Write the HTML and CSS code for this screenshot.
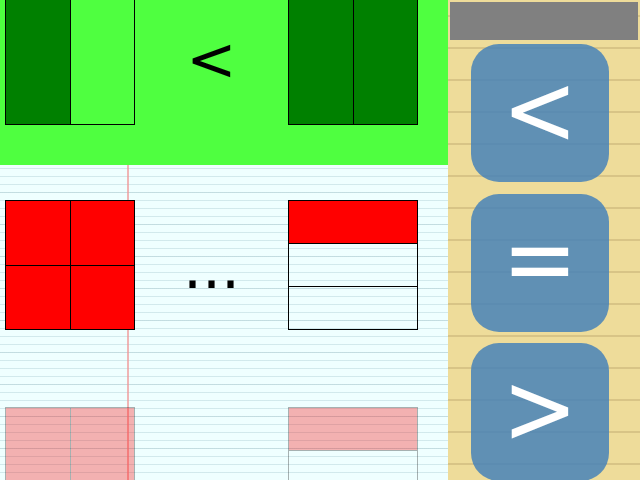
FILE: index.html
```html
<!DOCTYPE html>
<html>
<head>
<meta charset="utf-8">
<link rel="stylesheet" href="styles.css">
</head>
<body>
<div class="app">
  <main class="board">
    <section class="row row-green">
      <div class="rect cols">
        <div class="cell dark"></div>
        <div class="cell"></div>
      </div>
      <div class="mid mid-lt">&lt;</div>
      <div class="rect cols">
        <div class="cell dark"></div>
        <div class="cell dark"></div>
      </div>
    </section>
    <section class="row row-note">
      <div class="rect quad">
        <div class="cell red"></div>
        <div class="cell red"></div>
        <div class="cell red"></div>
        <div class="cell red"></div>
      </div>
      <div class="mid mid-dots">...</div>
      <div class="rect stack">
        <div class="cell red"></div>
        <div class="cell"></div>
        <div class="cell"></div>
      </div>
    </section>
    <section class="row row-note faded">
      <div class="rect cols">
        <div class="cell red"></div>
        <div class="cell red"></div>
      </div>
      <div class="mid"></div>
      <div class="rect stack">
        <div class="cell red"></div>
        <div class="cell"></div>
        <div class="cell"></div>
      </div>
    </section>
  </main>
  <aside class="side">
    <div class="bar"></div>
    <div class="buttons">
      <button class="btn"><span class="glyph">&lt;</span></button>
      <button class="btn"><span class="glyph">=</span></button>
      <button class="btn"><span class="glyph">&gt;</span></button>
    </div>
  </aside>
</div>
</body>
</html>
```

FILE: styles.css
```css
html, body {
  margin: 0;
  padding: 0;
}

body {
  font-family: "DejaVu Sans", sans-serif;
}

.app {
  display: flex;
  width: 640px;
  height: 480px;
  overflow: hidden;
}

.board {
  flex: none;
  width: 448px;
  height: 480px;
  overflow: hidden;
  background-color: #efffff;
  background-image:
    linear-gradient(to right, transparent 127px, rgba(240, 150, 150, 0.7) 127px, rgba(240, 150, 150, 0.7) 129px, transparent 129px),
    repeating-linear-gradient(to bottom, rgba(0, 60, 70, 0.07) 0, rgba(0, 60, 70, 0.07) 1px, transparent 1px, transparent 32px),
    repeating-linear-gradient(to bottom, rgba(0, 80, 100, 0.12) 0, rgba(0, 80, 100, 0.12) 1px, transparent 1px, transparent 8px);
}

.row {
  display: grid;
  grid-template-columns: 130px 153px 130px;
  grid-template-rows: 130px;
  padding-left: 5px;
  box-sizing: border-box;
}

.row-green {
  height: 170px;
  margin-top: -5px;
  background: #4fff40;
  align-content: end;
  padding-bottom: 40px;
}

.row-note {
  height: 207px;
  align-content: start;
  padding-top: 35px;
}

.faded {
  opacity: 0.3;
}

.rect {
  width: 130px;
  height: 130px;
  box-sizing: border-box;
  border: 1px solid #000;
  display: grid;
}

.cols {
  grid-template-columns: 64px 64px;
}

.cols .cell + .cell {
  border-left: 1px solid #000;
}

.quad {
  grid-template-columns: 64px 64px;
  grid-template-rows: 64px 64px;
}

.quad .cell:nth-child(2n) {
  border-left: 1px solid #000;
}

.quad .cell:nth-child(n+3) {
  border-top: 1px solid #000;
}

.stack {
  grid-template-rows: 42px 43px 43px;
}

.stack .cell + .cell {
  border-top: 1px solid #000;
}

.cell {
  box-sizing: border-box;
}

.dark {
  background: #008000;
}

.red {
  background: #ff0000;
}

.mid {
  height: 130px;
  box-sizing: border-box;
  display: flex;
  align-items: center;
  justify-content: center;
  font-size: 60px;
  line-height: normal;
  color: #000;
}

.mid-lt {
  padding-bottom: 2px;
}

.mid-dots {
  padding-top: 4px;
}

.side {
  flex: none;
  width: 192px;
  height: 480px;
  box-sizing: border-box;
  padding: 2px;
  background-color: #eedc9a;
  background-image: repeating-linear-gradient(to bottom, transparent 0, transparent 15px, #d8c486 15px, #d8c486 17px, transparent 17px, transparent 32px);
}

.bar {
  height: 38px;
  background: #808080;
  margin-bottom: 4px;
}

.buttons {
  display: flex;
  flex-direction: column;
  gap: 11.5px;
  padding-left: 21px;
}

.btn {
  width: 138px;
  height: 138px;
  flex: none;
  box-sizing: border-box;
  margin: 0;
  border: none;
  border-radius: 28px;
  padding: 0 0 8px 0;
  background: rgba(70, 130, 185, 0.85);
  color: #fff;
  font-family: "DejaVu Sans", sans-serif;
  font-size: 90px;
  line-height: normal;
  display: flex;
  align-items: center;
  justify-content: center;
}

.glyph {
  display: block;
  transform: scaleY(1.1);
}
```
